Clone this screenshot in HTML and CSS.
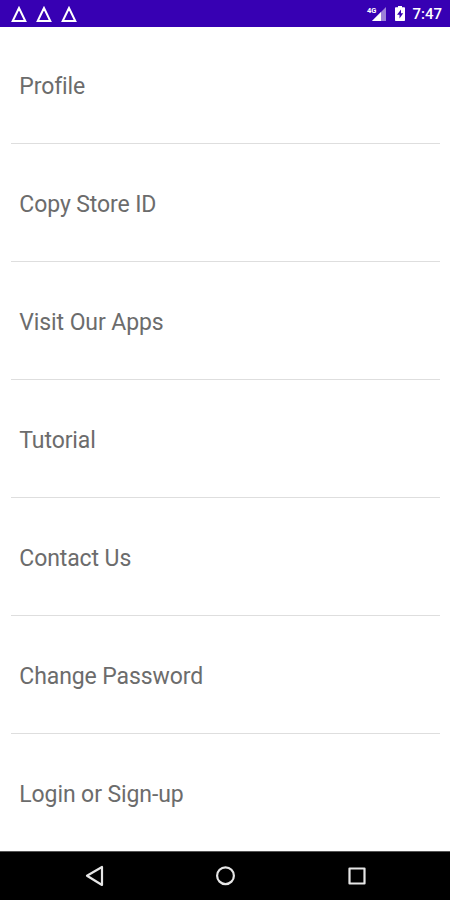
FILE: index.html
```html
<!DOCTYPE html>
<html lang="en"><head><meta charset="utf-8"><title>Settings</title><link rel="stylesheet" href="styles.css"></head>
<body>
<header class="status">
<svg class="alerts" viewBox="0 0 70 27"><path d="M19 8L12.700 21H25.300ZM44 8L37.700 21H50.300ZM69 8L62.700 21H75.300Z"/></svg>
<svg class="system" viewBox="366 0 42 27"><path d="M387 7V21H373Z" fill="#9b80d8"/><path d="M382 12V21H373Z" fill="#fff"/><path d="M396 8q0-.8.8-.8H399V6h4v1.200h2.200q.8 0 .8.800v12.200q0 .8-.8.800h-8.400q-.8 0-.8-.8Z" fill="#fff"/><path d="M402 9.500l-4 5.200h2.500v3.800l3.700-5.200h-2.200Z" fill="#3700b3"/><text x="368" y="12.500">4G</text></svg>
<time>7:47</time>
</header>
<main class="menu"><div class="item">Profile</div><div class="item">Copy Store ID</div><div class="item">Visit Our Apps</div><div class="item">Tutorial</div><div class="item">Contact Us</div><div class="item">Change Password</div><div class="item">Login or Sign-up</div></main>
<nav class="nav"><svg viewBox="0 0 450 49"><path d="M102 16V34L87 24.700Z"/><circle cx="225.500" cy="24.700" r="8.400"/><rect x="349.500" y="17.500" width="15" height="15"/></svg></nav>
</body></html>
```
FILE: styles.css
```css
*{box-sizing:border-box}
body{margin:0;height:900px;display:flex;flex-direction:column;font-family:Roboto,sans-serif;background:#fff;overflow:hidden}
.status{height:26.500px;flex:none;background:#3700b3;color:#fff;display:flex;align-items:center;padding-right:8px}
.alerts{width:70px;height:27px;overflow:visible;fill:none;stroke:#fff;stroke-width:2}
.system{width:42px;height:27px;margin-left:auto;font:bold 7.500px Roboto,sans-serif;fill:#fff}
.status time{font-size:15px;font-weight:500;margin-left:5px;padding-top:1px}
.menu{height:824.500px;flex:none;padding:0 10px 0 11px;overflow:hidden}
.item{height:117.900px;padding:4px 0 0 8.300px;border-bottom:1px solid #dedede;display:flex;align-items:center;font-size:23px;letter-spacing:-.1px;color:#6c6c6c}
.item:last-child{border-bottom:0}
.nav{height:49px;flex:none;background:#000;border-top:1px solid #555}
.nav svg{display:block;width:450px;height:49px;margin-top:-1px;fill:none;stroke:#e6e6e6;stroke-width:2.200;stroke-linejoin:round}
```
